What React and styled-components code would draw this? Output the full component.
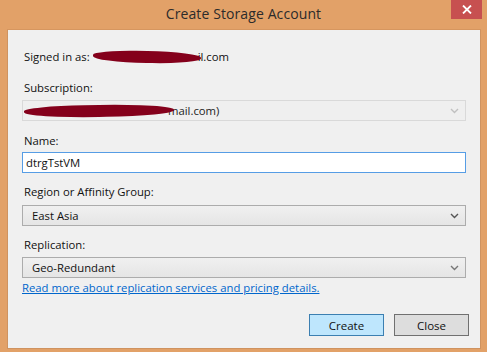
import styled, { createGlobalStyle } from "styled-components";

const GlobalStyle = createGlobalStyle`
    html, body {
        margin: 0;
        padding: 0;
        background: #e2a168;
    }
    body {
        font-family: "Open Sans", "Noto Sans", sans-serif;
    }
`;

const Window = styled.div`
    width: 487px;
    height: 352px;
    background: #e2a168;
    display: flex;
    flex-direction: column;
    box-sizing: border-box;
`;

const TitleBar = styled.div`
    height: 29px;
    display: flex;
    align-items: flex-start;
    position: relative;
`;

const Title = styled.div`
    flex: 1;
    text-align: center;
    font-size: 14px;
    line-height: 28px;
    color: #2b2b2b;
    letter-spacing: 0.1px;
`;

const CloseX = styled.div`
    position: absolute;
    top: 0;
    right: 5px;
    width: 31px;
    height: 19px;
    background: #c75050;
    display: flex;
    align-items: center;
    justify-content: center;
`;

const Client = styled.div`
    margin: 0 6px 0 7px;
    height: 320px;
    background: #f0f0f0;
    border: 1px solid #cf9360;
    border-top-color: #d6965f;
    box-sizing: border-box;
    padding: 19px 11px 0 14px;
    font-size: 11.3px;
    color: #111;
    display: flex;
    flex-direction: column;
`;

const Label = styled.div`
    line-height: 16px;
    margin-top: ${(p) => p.top ?? 11}px;
    margin-bottom: ${(p) => p.gap ?? 4}px;
    padding-left: 2px;
    white-space: nowrap;
    display: flex;
    align-items: center;
`;

const Scribble = styled.span`
    display: inline-block;
    width: ${(p) => p.w}px;
    height: ${(p) => p.h || 11}px;
    margin-left: ${(p) => p.ml || 0}px;
    margin-right: ${(p) => p.mr || 0}px;
    background: #84001b;
    border-radius: 40% 50% 45% 50%;
    transform: rotate(${(p) => p.rot || 0}deg);
`;

const Combo = styled.div`
    width: 444px;
    height: 21px;
    box-sizing: border-box;
    border: 1px solid ${(p) => (p.disabled ? "#d9d9d9" : "#acacac")};
    background: ${(p) =>
        p.disabled ? "#efefef" : "linear-gradient(#f0f0f0, #e5e5e5)"};
    color: ${(p) => (p.disabled ? "#222" : "#111")};
    display: flex;
    align-items: center;
    padding: 0 6px 0 9px;
    white-space: nowrap;
`;

const ComboText = styled.span`
    flex: 1;
    display: flex;
    align-items: center;
`;

const Input = styled.div`
    width: 444px;
    height: 21px;
    box-sizing: border-box;
    border: 1px solid #569de5;
    background: #fff;
    display: flex;
    align-items: center;
    padding-left: 3px;
`;

const Link = styled.a`
    margin-top: 2px;
    line-height: 16px;
    color: #0066cc;
    text-decoration: underline;
    cursor: pointer;
`;

const Buttons = styled.div`
    margin-top: 18px;
    display: flex;
    justify-content: flex-end;
    gap: 10px;
`;

const Button = styled.button`
    width: 75px;
    height: 22px;
    box-sizing: border-box;
    font-family: inherit;
    font-size: 11.5px;
    color: #111;
    padding: 0;
    border: 1px solid ${(p) => (p.primary ? "#3c7fb1" : "#707070")};
    background: ${(p) => (p.primary ? "#bee6fd" : "#dddddd")};
`;

const Chevron = ({ color = "#888" }) => (
    <svg width="9" height="6" viewBox="0 0 9 6">
        <path d="M1 1 L4.5 4.5 L8 1" fill="none" stroke={color} strokeWidth="1.4" />
    </svg>
);

const App = () => {
    return (
        <>
            <GlobalStyle />
            <Window>
                <TitleBar>
                    <Title>Create Storage Account</Title>
                    <CloseX>
                        <svg width="10" height="9" viewBox="0 0 10 9">
                            <path d="M1 0.5 L9 8.5 M9 0.5 L1 8.5" stroke="#fff" strokeWidth="1.8" />
                        </svg>
                    </CloseX>
                </TitleBar>
                <Client>
                    <Label top={0} gap={0}>
                        Signed in as:
                        <Scribble w={108} h={12} ml={3} mr={-3} rot={1} />
                        il.com
                    </Label>
                    <Label top={15}>Subscription:</Label>
                    <Combo disabled>
                        <ComboText>
                            <Scribble w={150} h={12} ml={-8} mr={-6} rot={-1} />
                            mail.com)
                        </ComboText>
                        <Chevron color="#c0c0c0" />
                    </Combo>
                    <Label top={12} gap={3}>Name:</Label>
                    <Input>dtrgTstVM</Input>
                    <Label gap={5}>Region or Affinity Group:</Label>
                    <Combo>
                        <ComboText>East Asia</ComboText>
                        <Chevron color="#555" />
                    </Combo>
                    <Label>Replication:</Label>
                    <Combo>
                        <ComboText>Geo-Redundant</ComboText>
                        <Chevron color="#777" />
                    </Combo>
                    <Link>Read more about replication services and pricing details.</Link>
                    <Buttons>
                        <Button primary>Create</Button>
                        <Button>Close</Button>
                    </Buttons>
                </Client>
            </Window>
        </>
    );
};

export default App;
